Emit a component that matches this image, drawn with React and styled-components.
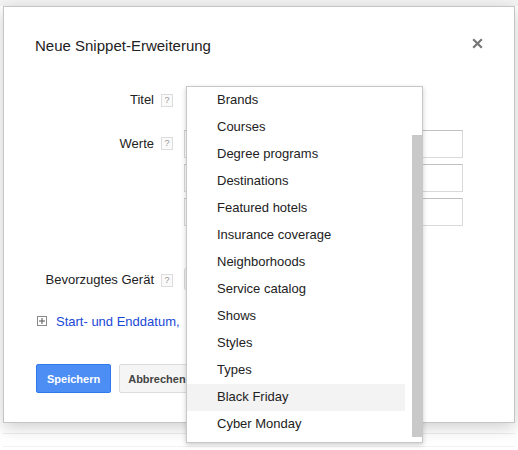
import React from 'react'
import styled, { createGlobalStyle } from 'styled-components'

const GlobalStyle = createGlobalStyle`
  html, body {
    margin: 0;
    padding: 0;
    background: #fff;
    font-family: "Liberation Sans", Arial, sans-serif;
    color: #222;
  }
`

const Page = styled.div`
  width: 518px;
  height: 450px;
  overflow: hidden;
  box-sizing: border-box;
  padding: 6px 3px 0 3px;
  background: linear-gradient(#f4f4f4 0, #f4f4f4 6px, #fff 6px);
`

const Modal = styled.div`
  position: relative;
  box-sizing: border-box;
  width: 512px;
  height: 417px;
  padding: 27px 31px 0 31px;
  background: #fff;
  border: 1px solid #c5c5c5;
  box-shadow: 0 4px 16px rgba(0, 0, 0, 0.2);
`

const Header = styled.div`
  display: flex;
  justify-content: space-between;
  align-items: flex-start;
  height: 24px;
  margin-bottom: 28px;
`

const Title = styled.div`
  font-size: 15px;
  line-height: 24px;
  color: #222;
`

const Close = styled.button`
  border: none;
  background: transparent;
  padding: 0;
  margin: 4px 0 0 0;
  width: 11px;
  height: 11px;
  display: flex;
  cursor: pointer;
`

const Form = styled.div`
  display: flex;
  flex-direction: column;
`

const Row = styled.div`
  display: grid;
  grid-template-columns: 119px auto 279px;
  justify-content: start;
  align-items: ${(p) => (p.$top ? 'start' : 'center')};
  margin-top: ${(p) => p.$mt || 0}px;
`

const Label = styled.div`
  font-size: 13px;
  line-height: 28px;
  text-align: right;
  white-space: nowrap;
`

const Help = styled.span`
  box-sizing: border-box;
  width: 12px;
  height: 13px;
  margin: ${(p) => (p.$top ? 7 : 0)}px 11px 0 7px;
  border: 1px solid #dcdcdc;
  background: #fafafa;
  color: #999;
  font-size: 9px;
  line-height: 11px;
  text-align: center;
`

const Field = styled.div`
  position: relative;
  height: ${(p) => p.$h || 28}px;
  display: flex;
  flex-direction: column;
  gap: 6px;
`

const Input = styled.div`
  box-sizing: border-box;
  height: 28px;
  border: 1px solid #d9d9d9;
  border-top-color: #c0c0c0;
  background: #fff;
`

const SelectBox = styled.div`
  box-sizing: border-box;
  margin-top: 2px;
  height: 22px;
  width: 120px;
  border: 1px solid #dcdcdc;
  border-radius: 2px;
  background: #f5f5f5;
`

const LinkRow = styled.div`
  display: flex;
  align-items: center;
  gap: 9px;
  margin-top: 19px;
  padding-left: 2px;
  height: 16px;
`

const PlusBox = styled.span`
  box-sizing: border-box;
  width: 10px;
  height: 10px;
  border: 1px solid #8a8a8a;
  position: relative;
  &::before,
  &::after {
    content: '';
    position: absolute;
    background: #555;
  }
  &::before {
    left: 1px;
    right: 1px;
    top: 3px;
    height: 2px;
    transform: scaleY(0.5);
  }
  &::after {
    top: 1px;
    bottom: 1px;
    left: 3px;
    width: 2px;
    transform: scaleX(0.5);
  }
`

const Link = styled.a`
  font-size: 13px;
  color: #1848d6;
  text-decoration: none;
  white-space: nowrap;
`

const Buttons = styled.div`
  display: flex;
  gap: 8px;
  margin-top: 35px;
  padding-left: 1px;
`

const Button = styled.button`
  box-sizing: border-box;
  height: 29px;
  padding: 0 ${(p) => (p.$primary ? 10 : 8)}px;
  min-width: 74px;
  border-radius: 2px;
  border: 1px solid ${(p) => (p.$primary ? '#3079ed' : '#dcdcdc')};
  background: ${(p) => (p.$primary ? '#4d8ef5' : '#f5f5f5')};
  color: ${(p) => (p.$primary ? '#fff' : '#444')};
  font-family: "Liberation Sans", Arial, sans-serif;
  font-size: 11px;
  font-weight: bold;
  cursor: pointer;
`

const Menu = styled.div`
  position: absolute;
  left: 2px;
  top: 0;
  z-index: 5;
  box-sizing: border-box;
  width: 237px;
  height: 357px;
  display: flex;
  background: #fff;
  border: 1px solid #c8c8c8;
  box-shadow: 0 2px 5px rgba(0, 0, 0, 0.2);
`

const MenuList = styled.div`
  width: 219px;
  display: flex;
  flex-direction: column;
`

const MenuItem = styled.div`
  height: 27px;
  line-height: 26px;
  padding-left: 30px;
  font-size: 13px;
  color: #222;
  white-space: nowrap;
  background: ${(p) => (p.$active ? '#f3f3f3' : 'transparent')};
`

const ScrollTrack = styled.div`
  margin-left: 7px;
  width: 10px;
  padding: 48px 0 5px 0;
  display: flex;
`

const Thumb = styled.div`
  flex: 1;
  background: #c9c9c9;
`

const Below = styled.div`
  margin-top: 10px;
  height: 12px;
  border-top: 1px solid #eeeeee;
  border-bottom: 1px solid #f2f2f2;
`

const items = [
  'Brands',
  'Courses',
  'Degree programs',
  'Destinations',
  'Featured hotels',
  'Insurance coverage',
  'Neighborhoods',
  'Service catalog',
  'Shows',
  'Styles',
  'Types',
  'Black Friday',
  'Cyber Monday',
]

const CloseIcon = () => (
  <svg width="11" height="11" viewBox="0 0 11 11">
    <path d="M1.2 1.2 L9.8 9.8 M9.8 1.2 L1.2 9.8" stroke="#777" strokeWidth="2.2" />
  </svg>
)

const App = () => {
  return (
    <Page>
      <GlobalStyle />
      <Modal>
        <Header>
          <Title>Neue Snippet-Erweiterung</Title>
          <Close aria-label="Schließen">
            <CloseIcon />
          </Close>
        </Header>
        <Form>
          <Row>
            <Label>Titel</Label>
            <Help>?</Help>
            <Field>
              <Menu>
                <MenuList>
                  {items.map((item) => (
                    <MenuItem key={item} $active={item === 'Black Friday'}>
                      {item}
                    </MenuItem>
                  ))}
                </MenuList>
                <ScrollTrack>
                  <Thumb />
                </ScrollTrack>
              </Menu>
            </Field>
          </Row>
          <Row $top $mt={16}>
            <Label>Werte</Label>
            <Help $top>?</Help>
            <Field $h={96}>
              <Input />
              <Input />
              <Input />
            </Field>
          </Row>
          <Row $mt={40}>
            <Label>Bevorzugtes Gerät</Label>
            <Help>?</Help>
            <Field>
              <SelectBox />
            </Field>
          </Row>
          <LinkRow>
            <PlusBox />
            <Link href="#">Start- und Enddatum,</Link>
          </LinkRow>
          <Buttons>
            <Button $primary>Speichern</Button>
            <Button>Abbrechen</Button>
          </Buttons>
        </Form>
      </Modal>
      <Below />
    </Page>
  )
}

export default App
